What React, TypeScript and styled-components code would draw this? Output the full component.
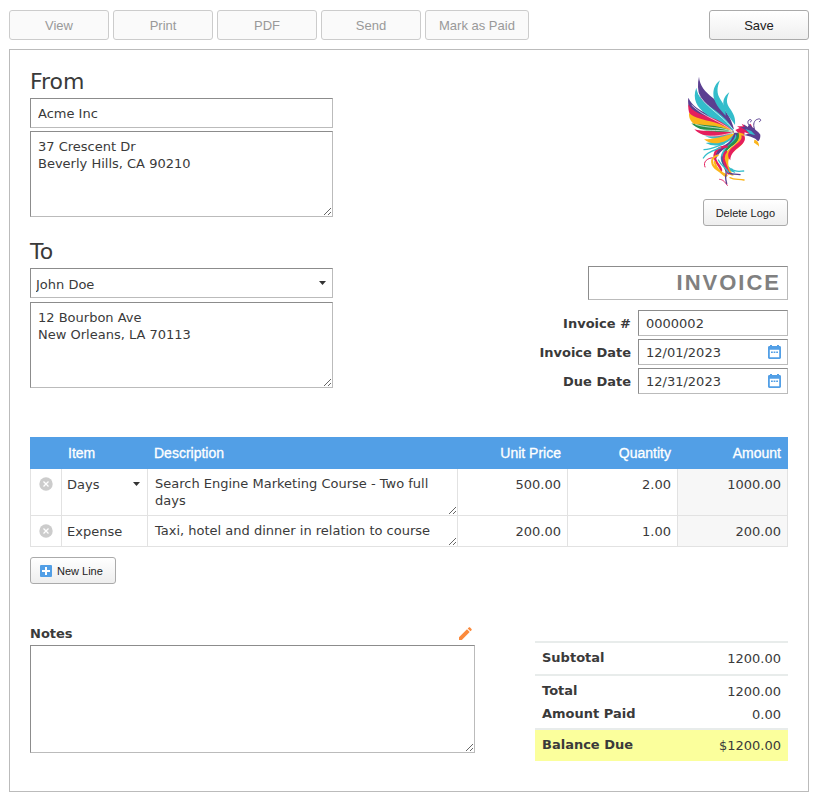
import React, { useState } from "react";
import styled, { createGlobalStyle, css } from "styled-components";

const sans = '"DejaVu Sans", Verdana, sans-serif';
const ui = '"Liberation Sans", Arial, sans-serif';
const strong = `bold 13px/17px ${sans}`;

const GlobalStyle = createGlobalStyle`
  *, *::before, *::after { box-sizing: border-box; }
  body { margin: 0; background: #fff; color: #3a3a3a; font: 13px/17px ${sans}; }
  h2 { margin: 0; }
`;

const Page = styled.main`
  padding: 10px 10px 9px 9px;
`;

const Toolbar = styled.div`
  display: flex;
  gap: 4px;
  margin-bottom: 9px;
`;

const ToolButton = styled.button<{ $primary?: boolean }>`
  height: 30px;
  min-width: 100px;
  padding: 0 13px;
  font: 13px ${ui};
  color: #222;
  border: 1px solid #aaa;
  border-radius: 3px;
  background: linear-gradient(#fff, #efefef);
  cursor: pointer;
  ${(p) => p.$primary && css`margin-left: auto;`}
  &:disabled {
    color: #999;
    border-color: #ccc;
    background: #fafafa;
    cursor: default;
  }
`;

const SmallButton = styled.button`
  display: inline-flex;
  align-items: center;
  gap: 5px;
  height: 27px;
  padding: 0 12px 0 9px;
  font: 11px ${ui};
  color: #222;
  border: 1px solid #aaa;
  border-radius: 3px;
  background: linear-gradient(#fff, #eee);
  cursor: pointer;
`;

const DeleteLogoButton = styled(SmallButton)`
  padding: 0 12px;
`;

const Sheet = styled.form`
  border: 1px solid #bbb;
  padding: 20px 20px 30px;
`;

const Top = styled.div`
  display: flex;
  justify-content: space-between;
`;

const Parties = styled.div`
  width: 40%;
  display: flex;
  flex-direction: column;
  gap: 23px;
`;

const Party = styled.section<{ $gap: number }>`
  display: flex;
  flex-direction: column;
  gap: ${(p) => p.$gap}px;
`;

const PartyTitle = styled.h2<{ $h: number }>`
  height: ${(p) => p.$h}px;
  font: 22px/23px ${sans};
`;

const fieldBox = css`
  width: 100%;
  margin: 0;
  color: #3a3a3a;
  background: #fff;
  font: 13px/17px ${sans};
  border: 1px solid;
  border-color: #8c8c8c #bbb #bbb #8c8c8c;
  border-radius: 0;
  outline-color: #529fe6;
`;

const Input = styled.input<{ $tall?: boolean }>`
  ${fieldBox}
  height: ${(p) => (p.$tall ? 30 : 26)}px;
  padding: 0 7px;
`;

const TextArea = styled.textarea<{ $h: number }>`
  ${fieldBox}
  display: block;
  height: ${(p) => p.$h}px;
  padding: 6px 7px;
  resize: both;
`;

const SelectWrap = styled.div`
  position: relative;
  display: flex;
  svg {
    position: absolute;
    right: 7px;
    top: 13px;
    pointer-events: none;
  }
`;

const Select = styled.select`
  ${fieldBox}
  appearance: none;
  height: 30px;
  padding: 2px 20px 0 5px;
`;

const Meta = styled.div`
  display: flex;
  flex-direction: column;
  align-items: flex-end;
`;

const LogoBox = styled.div`
  height: 129px;
  padding: 6px 25px 0 0;
`;

const TitleInput = styled.input`
  ${fieldBox}
  width: 200px;
  height: 34px;
  margin: 40px 0 10px;
  padding: 0 6px;
  font: bold 22px ${ui};
  letter-spacing: 2px;
  text-align: right;
  color: #808080;
`;

const MetaGrid = styled.div`
  display: grid;
  grid-template-columns: auto 150px;
  gap: 3px 7px;
  align-items: center;
`;

const MetaLabel = styled.label`
  font: ${strong};
  text-align: right;
`;

const DateField = styled.div`
  position: relative;
`;

const DateButton = styled.button`
  position: absolute;
  right: 7px;
  top: 6px;
  display: flex;
  padding: 0;
  border: 0;
  background: none;
  cursor: pointer;
`;

const Lines = styled.table`
  width: 100%;
  margin: 43px 0 10px;
  border-spacing: 0;
  table-layout: fixed;
`;

const HeadCell = styled.th<{ $w?: number; $right?: boolean }>`
  height: 32px;
  padding: 0 7px 0 6px;
  ${(p) => p.$w && `width: ${p.$w}px;`}
  background: #529fe6;
  color: #fff;
  font: 14px ${ui};
  -webkit-text-stroke: 0.3px #fff;
  text-align: ${(p) => (p.$right ? "right" : "left")};
`;

const Cell = styled.td<{ $shade?: boolean; $center?: boolean }>`
  padding: 0;
  vertical-align: top;
  border: solid #e2e2e2;
  border-width: 0 1px 1px 0;
  background: ${(p) => (p.$shade ? "#f7f7f7" : "#fff")};
  &:first-child { border-left-width: 1px; }
  ${(p) => p.$center && css`text-align: center;`}
`;

const RemoveButton = styled.button`
  display: inline-flex;
  margin-top: 8px;
  padding: 0;
  border: 0;
  background: none;
  cursor: pointer;
`;

const CellInput = styled.input<{ $right?: boolean }>`
  ${fieldBox}
  display: block;
  height: 30px;
  border: 0;
  padding: 0 6px 0 5px;
  background: transparent;
  text-align: ${(p) => (p.$right ? "right" : "left")};
`;

const CellSelect = styled(Select)`
  border: 0;
  padding-top: 0;
`;

const LineText = styled.textarea<{ $h: number }>`
  ${fieldBox}
  display: block;
  height: ${(p) => p.$h}px;
  border: 0;
  padding: 6px 7px;
  resize: both;
  overflow: hidden;
`;

const AmountOutput = styled.output`
  display: block;
  padding: 7px 6px 0 0;
  text-align: right;
`;

const Bottom = styled.div`
  display: flex;
  justify-content: space-between;
  align-items: flex-end;
  margin-top: 40px;
`;

const Notes = styled.section`
  flex: 0 1 445px;
  margin-bottom: 8px;
`;

const NotesHead = styled.div`
  display: flex;
  justify-content: space-between;
  align-items: center;
  height: 21px;
  padding: 0 3px 2px 0;
  label { font: ${strong}; }
`;

const IconButton = styled.button`
  display: flex;
  padding: 0;
  border: 0;
  background: none;
  cursor: pointer;
`;

const Totals = styled.table`
  width: 253px;
  border-spacing: 0;
`;

const TotalRow = styled.tr<{ $rule?: boolean; $due?: boolean; $h: number }>`
  height: ${(p) => p.$h}px;
  background: ${(p) => (p.$due ? "#fbff9c" : "transparent")};
  th, td {
    padding: ${(p) => (p.$rule ? 6 : 0)}px 7px 0;
    vertical-align: top;
    border-top: ${(p) => (p.$rule ? "2px solid #e8eceb" : "0")};
  }
  th { text-align: left; font: ${strong}; }
  td { text-align: right; padding-top: ${(p) => (p.$rule ? 7 : 1)}px; }
`;

const Caret = () => (
  <svg width="7" height="4" viewBox="0 0 7 4" aria-hidden="true">
    <path d="M0 0h7L3.5 4z" fill="#333" />
  </svg>
);

const CalendarIcon = () => (
  <svg width="13" height="14" viewBox="0 0 13 14" aria-hidden="true">
    <path
      fillRule="evenodd"
      fill="#529fe6"
      d="M2 0h2v1h5V0h2v1h.6c.8 0 1.4.6 1.4 1.4v10.2c0 .8-.6 1.4-1.4 1.4H1.4C.6 14 0 13.4 0 12.600V2.4C0 1.6.6 1 1.4 1H2zM1.800 4.800v7.400h9.400V4.800z"
    />
    <path fill="#529fe6" d="M3 6.500h1.800v1.600H3zm2.600 0h1.800v1.600H5.600zm2.600 0H10v1.600H8.200z" />
  </svg>
);

const RemoveIcon = () => (
  <svg width="14" height="14" viewBox="0 0 14 14" aria-hidden="true">
    <circle cx="7" cy="7" r="6.7" fill="#ccc" />
    <path d="M4.500 4.500l5 5m0-5l-5 5" stroke="#fff" strokeWidth="1.300" />
  </svg>
);

const PlusIcon = () => (
  <svg width="12" height="12" viewBox="0 0 12 12" aria-hidden="true">
    <rect width="12" height="12" rx="1" fill="#529fe6" />
    <path d="M6 2v8M2 6h8" stroke="#fff" strokeWidth="2" />
  </svg>
);

const PencilIcon = () => (
  <svg width="13" height="13" viewBox="0 0 13 13" aria-hidden="true">
    <path d="M0 13v-2.800L8 2.300l2.700 2.700L2.800 13zM8.700 1.600L9.800.5c.4-.4.9-.4 1.300 0l1.400 1.400c.4.4.4.9 0 1.300l-1.100 1.100z" fill="#fb8a3c" />
  </svg>
);

const PhoenixLogo = () => (
  <svg width="75" height="112" viewBox="23 33 225 336" role="img" aria-label="Phoenix logo">
    <g fill="#5b3f91">
      <path d="M56 35C58 62 74 80 98 99C130 127 152 154 161 193C140 180 115 164 93 146C61 116 46 78 56 35Z" />
      <path d="M24 98C35 122 55 133 81 147C115 165 142 181 162 202C128 200 85 184 57 167C32 151 20 127 24 98Z" />
    </g>
    <g fill="#33bdcb">
      <path d="M119 46C109 68 109 86 120 103C131 119 137 130 136 152C119 134 98 111 99 85C100 67 107 55 119 46Z" />
      <path d="M147 82C138 101 137 114 147 128C161 147 166 160 164 180C150 158 131 142 129 118C128 101 136 90 147 82Z" />
      <path d="M48 68C52 94 68 109 94 128C126 150 147 171 161 198C132 184 101 165 76 146C50 127 35 101 48 68Z" />
      <path d="M65 207C93 209 126 206 161 202C134 222 94 230 65 207Z" />
      <path d="M76 234C106 233 140 216 168 205C151 236 109 252 76 234Z" />
    </g>
    <g fill="#e51e5d">
      <path d="M24 118C36 140 59 148 87 156C119 166 144 182 161 202C124 192 88 189 58 176C34 165 22 147 24 118Z" />
      <path d="M42 193C70 202 113 193 161 201C124 219 68 221 42 193Z" />
    </g>
    <g fill="#fbb51b">
      <path d="M26 143C42 160 71 163 101 172C127 179 145 190 161 202C118 191 78 196 48 181C33 173 25 161 26 143Z" />
      <path d="M71 223C103 223 134 212 165 203C144 232 98 247 71 223Z" />
    </g>
    <path fill="#26904c" d="M33 175C64 184 107 174 161 202C117 200 63 206 33 175Z" />

    <g fill="none" stroke="#fff" strokeWidth="2">
      <path d="M54 84C70 122 120 146 156 190M34 120C66 154 124 169 157 199M45 178C82 190 119 185 155 199M49 192C91 200 123 193 155 201M67 211C99 217 128 210 158 203" />
    </g>

    <path fill="#e51e5d" d="M165 195L178 189L170 184L188 184L184 176L202 187L211 176L220 195L207 207L193 202L192 212L176 206Z" />
    <path fill="#5b3f91" d="M180 185L193 187L190 178L202 186L207 177L215 187L222 190C226 198 235 200 240 209C241 219 237 226 233 229C224 217 208 214 191 210L210 205Z" />
    <path fill="#33bdcb" d="M195 192L213 198L225 211L208 206Z" />
    <path fill="#fbb51b" d="M222 224C228 225 237 230 236 245C232 238 226 237 221 233Z" />
    <path fill="#5b3f91" d="M162 203L176 203C178 222 163 233 144 244C128 254 117 262 107 282C103 265 111 253 126 244C144 235 155 225 162 203Z" />
    <path fill="#33bdcb" d="M165 207C176 220 158 235 149 247C137 260 128 271 133 290C144 309 161 311 165 324C148 319 130 307 123 290C116 268 130 253 144 240C158 228 165 218 165 207Z" />
    <path fill="#26904c" d="M171 203C183 207 179 225 164 237C150 247 137 256 130 271C131 251 146 240 158 230C167 221 172 213 171 203Z" />
    <path fill="#fbb51b" d="M174 202L189 206C198 219 190 235 178 245C157 261 146 273 144 289C142 306 151 320 160 332C144 332 128 315 128 294C128 269 142 254 158 242C172 231 180 219 174 202Z" />
    <path fill="#e51e5d" d="M192 213C199 227 185 239 173 248C156 261 150 272 150 286C138 273 143 255 162 242C177 231 187 223 183 211Z" />

    <g fill="none" strokeLinecap="round">
      <g stroke="#e51e5d">
        <path d="M139 245C109 245 98 264 105 284C111 301 124 307 122 318M137 260C118 281 141 301 144 325" strokeWidth="7" />
        <path d="M104 278C80 277 67 291 74 306M118 343C127 344 132 348 141 361" strokeWidth="3" />
      </g>
      <g stroke="#fbb51b">
        <path d="M112 271C86 280 94 302 111 314C126 323 129 330 137 333M103 291C107 313 121 324 139 331" strokeWidth="6" />
        <path d="M149 338C162 346 176 341 191 345" strokeWidth="4" />
      </g>
      <g stroke="#5b3f91">
        <path d="M125 276C122 297 141 308 137 329C134 337 137 346 139 356M143 321C151 331 164 325 179 329" strokeWidth="4" />
        <path d="M212 184C202 180 200 170 206 165C213 161 217 168 210 171M222 190C217 178 222 165 231 163C241 158 245 168 237 170" strokeWidth="3" />
      </g>
      <g stroke="#33bdcb">
        <path d="M71 254C93 254 112 243 132 236M69 279C80 259 104 255 121 248M114 285C123 303 139 310 144 322M154 312C164 322 176 319 190 318" strokeWidth="4" />
      </g>
    </g>
  </svg>
);

const lines = [
  { item: "Days", select: true, text: "Search Engine Marketing Course - Two full days", h: 46, price: "500.00", qty: "2.00", amount: "1000.00" },
  { item: "Expense", select: false, text: "Taxi, hotel and dinner in relation to course", h: 30, price: "200.00", qty: "1.00", amount: "200.00" },
];

export default function App() {
  const [client, setClient] = useState("John Doe");
  return (
    <Page>
      <GlobalStyle />
      <Toolbar>
        {["View", "Print", "PDF", "Send", "Mark as Paid"].map((t) => (
          <ToolButton key={t} type="button" disabled>{t}</ToolButton>
        ))}
        <ToolButton type="submit" form="invoice" $primary>Save</ToolButton>
      </Toolbar>
      <Sheet id="invoice" onSubmit={(e) => e.preventDefault()}>
        <Top>
          <Parties>
            <Party $gap={3}>
              <PartyTitle $h={25}>From</PartyTitle>
              <Input $tall aria-label="From name" defaultValue="Acme Inc" />
              <TextArea $h={86} aria-label="From address" spellCheck={false} defaultValue={"37 Crescent Dr\nBeverly Hills, CA 90210"} />
            </Party>
            <Party $gap={4}>
              <PartyTitle $h={24}>To</PartyTitle>
              <SelectWrap>
                <Select aria-label="Client" value={client} onChange={(e) => setClient(e.target.value)}>
                  <option>John Doe</option>
                </Select>
                <Caret />
              </SelectWrap>
              <TextArea $h={86} aria-label="Client address" spellCheck={false} defaultValue={"12 Bourbon Ave\nNew Orleans, LA 70113"} />
            </Party>
          </Parties>
          <Meta>
            <LogoBox><PhoenixLogo /></LogoBox>
            <DeleteLogoButton type="button">Delete Logo</DeleteLogoButton>
            <TitleInput aria-label="Document title" defaultValue="INVOICE" />
            <MetaGrid>
              <MetaLabel htmlFor="number">Invoice #</MetaLabel>
              <Input id="number" defaultValue="0000002" />
              <MetaLabel htmlFor="date">Invoice Date</MetaLabel>
              <DateField>
                <Input id="date" defaultValue="12/01/2023" />
                <DateButton type="button" aria-label="Pick invoice date"><CalendarIcon /></DateButton>
              </DateField>
              <MetaLabel htmlFor="due">Due Date</MetaLabel>
              <DateField>
                <Input id="due" defaultValue="12/31/2023" />
                <DateButton type="button" aria-label="Pick due date"><CalendarIcon /></DateButton>
              </DateField>
            </MetaGrid>
          </Meta>
        </Top>
        <Lines>
          <thead>
            <tr>
              <HeadCell $w={32} aria-label="Remove" />
              <HeadCell $w={86}>Item</HeadCell>
              <HeadCell>Description</HeadCell>
              <HeadCell $w={110} $right>Unit Price</HeadCell>
              <HeadCell $w={110} $right>Quantity</HeadCell>
              <HeadCell $w={110} $right>Amount</HeadCell>
            </tr>
          </thead>
          <tbody>
            {lines.map((l) => (
              <tr key={l.item}>
                <Cell $center>
                  <RemoveButton type="button" aria-label={`Remove ${l.item}`}><RemoveIcon /></RemoveButton>
                </Cell>
                <Cell>
                  {l.select ? (
                    <SelectWrap>
                      <CellSelect aria-label="Item" defaultValue={l.item}><option>{l.item}</option></CellSelect>
                      <Caret />
                    </SelectWrap>
                  ) : (
                    <CellInput aria-label="Item" defaultValue={l.item} />
                  )}
                </Cell>
                <Cell><LineText $h={l.h} aria-label="Description" spellCheck={false} defaultValue={l.text} /></Cell>
                <Cell><CellInput $right aria-label="Unit price" defaultValue={l.price} /></Cell>
                <Cell><CellInput $right aria-label="Quantity" defaultValue={l.qty} /></Cell>
                <Cell $shade><AmountOutput>{l.amount}</AmountOutput></Cell>
              </tr>
            ))}
          </tbody>
        </Lines>
        <SmallButton type="button"><PlusIcon />New Line</SmallButton>
        <Bottom>
          <Notes>
            <NotesHead>
              <label htmlFor="notes">Notes</label>
              <IconButton type="button" aria-label="Edit notes"><PencilIcon /></IconButton>
            </NotesHead>
            <TextArea $h={108} id="notes" />
          </Notes>
          <Totals>
            <tbody>
              <TotalRow $h={33} $rule><th scope="row">Subtotal</th><td>1200.00</td></TotalRow>
              <TotalRow $h={31} $rule><th scope="row">Total</th><td>1200.00</td></TotalRow>
              <TotalRow $h={23}><th scope="row">Amount Paid</th><td>0.00</td></TotalRow>
              <TotalRow $h={33} $rule $due><th scope="row">Balance Due</th><td>$1200.00</td></TotalRow>
            </tbody>
          </Totals>
        </Bottom>
      </Sheet>
    </Page>
  );
}
